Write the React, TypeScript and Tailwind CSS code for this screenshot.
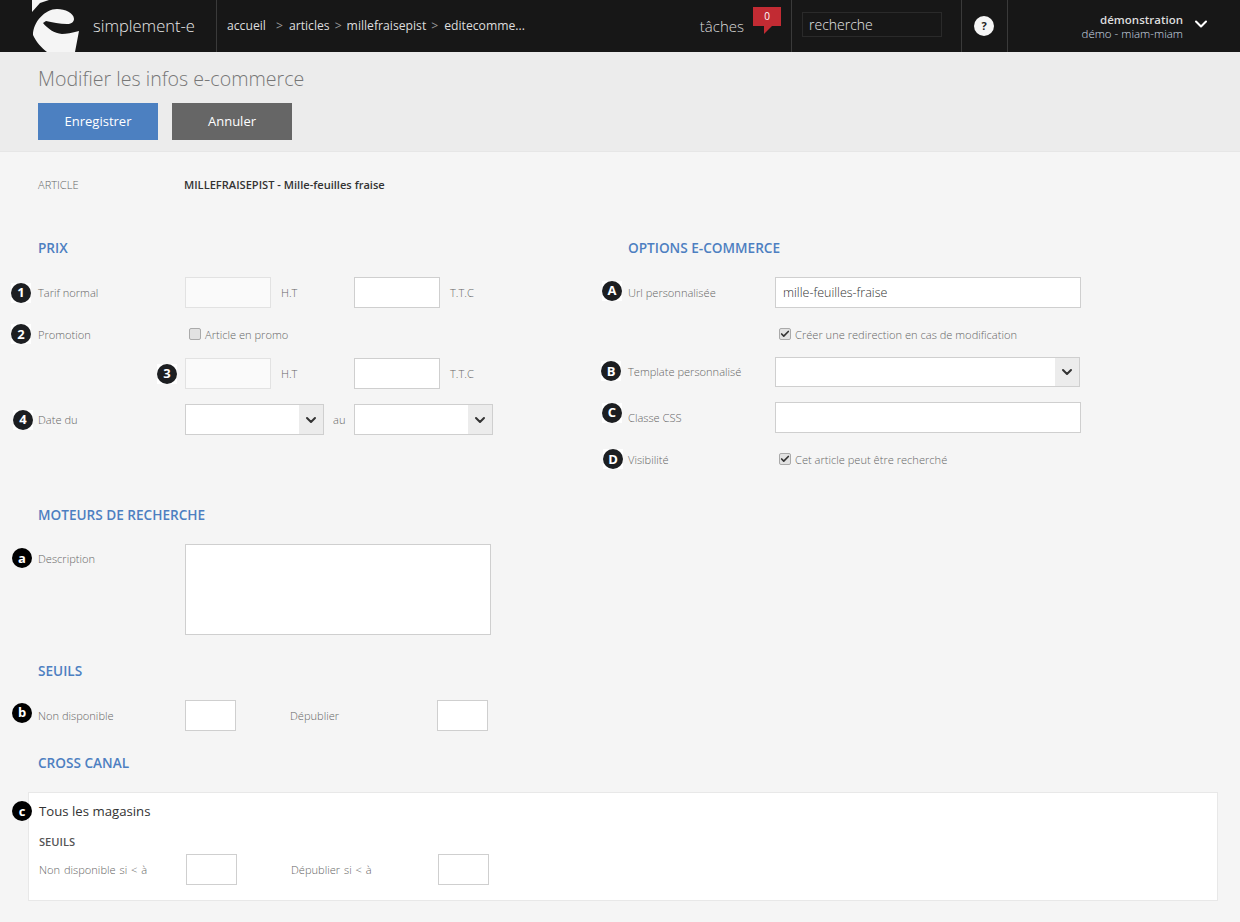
import type { ReactNode } from "react";
import { ChevronDown, Check as CheckIcon } from "lucide-react";

const font = "font-['Open_Sans',sans-serif]";

function Badge({ children, className, black }: { children: ReactNode; className: string; black?: boolean }) {
  return (
    <span className={`absolute top-1/2 flex h-[20px] w-[20px] -translate-y-1/2 ${black ? "" : "bg-white"} ${className}`}>
      <span className={`flex h-full w-full items-center justify-center rounded-full text-[13px] font-bold leading-none text-white ${black ? "bg-black" : "bg-[#1c1e21]"}`}>
        {children}
      </span>
    </span>
  );
}

function Label({ children, className = "" }: { children: ReactNode; className?: string }) {
  return <span className={`text-[11.1px] font-light leading-[18px] text-[#666] ${className}`}>{children}</span>;
}

function Heading({ children, className = "" }: { children: ReactNode; className?: string }) {
  return <h2 className={`text-[13.6px] font-semibold leading-[18px] text-[#4d7fc1] ${className}`}>{children}</h2>;
}

function Input({ className = "", disabled, value }: { className?: string; disabled?: boolean; value?: string }) {
  return (
    <input
      readOnly
      value={value ?? ""}
      className={`h-[31px] border px-[7px] text-[12.5px] font-light text-[#333] outline-none ${disabled ? "border-[#e2e2e2] bg-[#fafafa]" : "border-[#cfcfcf] bg-white"} ${className}`}
    />
  );
}

function Select({ className = "" }: { className?: string }) {
  return (
    <div className={`flex justify-end border border-[#cfcfcf] bg-white ${className}`}>
      <span className="flex w-[24px] items-center justify-center bg-[#ececec]">
        <ChevronDown size={16} strokeWidth={3} className="text-[#333]" />
      </span>
    </div>
  );
}

function Check({ checked, children }: { checked?: boolean; children: ReactNode }) {
  return (
    <div className="flex h-[18px] items-center gap-[4px] pl-[4px]">
      <span className="-mt-[2px] flex h-[12px] w-[12px] items-center justify-center rounded-[2px] border border-[#aaa] bg-[#e2e2e2]">
        {checked && <CheckIcon size={10} strokeWidth={4} className="text-[#333]" />}
      </span>
      <Label>{children}</Label>
    </div>
  );
}

function Logo() {
  return (
    <svg viewBox="30 0 52 52" className="h-[52px] w-[52px] shrink-0">
      <path fill="#f5f5f5" d="M32 0 H49 L40 3 L32 12 Z" />
      <path
        fill="#f5f5f5"
        d="M43 23 L46 21 C52 22 60 24 67 24 C71 24 74 22 74 19 C74 13 65 9 57 9 C45 9 33 22 33 35 C36 42 42 48 47 52 H75 L79 31 C72 33 66 34 62 34 C54 33 48 29 43 23 Z"
      />
    </svg>
  );
}

function Row({ children, className = "" }: { children: ReactNode; className?: string }) {
  return <div className={`relative flex items-center ${className}`}>{children}</div>;
}

export default function App() {
  return (
    <div className={`min-h-[922px] bg-[#f5f5f5] ${font}`}>
      <header className="flex h-[52px] items-stretch bg-[#171717] text-[#e8e8e8]">
        <div className="flex w-[217px] items-center overflow-hidden border-r border-[#3a3a3a] pl-[30px]">
          <Logo />
          <span className="ml-[11px] text-[16.5px] font-light">simplement-e</span>
        </div>
        <nav className="flex w-[575px] items-center border-r border-[#3a3a3a] pl-[10px] text-[12.2px] text-[#ddd]">
          <span className="mr-[10px]">accueil</span>
          <span className="mr-[6px] text-[#999]">&gt;</span>
          <span className="mr-[5px]">articles</span>
          <span className="mr-[5px] text-[#999]">&gt;</span>
          <span className="mr-[5px]">millefraisepist</span>
          <span className="mr-[6px] text-[#999]">&gt;</span>
          <span>editecomme...</span>
          <span className="ml-auto mr-[47px] text-[15px] font-light">tâches</span>
        </nav>
        <div className="w-0">
          <div className="relative -ml-[39px] mt-[7px] flex h-[19px] w-[28px] justify-center bg-[#c22b33] text-[10px] leading-[18px] text-white">
            0
            <span className="absolute left-[11px] top-[19px] border-r-[8px] border-t-[8px] border-r-transparent border-t-[#c22b33]" />
          </div>
        </div>
        <div className="flex w-[170px] border-r border-[#3a3a3a] pl-[10px] pt-[12px]">
          <div className="flex h-[25px] w-[140px] items-center border border-[#2a2a2a] pl-[6px] text-[14px] font-light text-[#e8e8e8]">
            recherche
          </div>
        </div>
        <div className="flex w-[46px] items-center justify-center border-r border-[#3a3a3a] pr-[1px]">
          <span className="flex h-[20px] w-[20px] items-center justify-center rounded-full bg-[#f5f5f5] text-[11px] font-bold text-[#222]">?</span>
        </div>
        <div className="flex flex-1 items-center justify-end pr-[29px]">
          <div className="mt-[2px] text-right text-[11.5px] leading-[14px]">
            <div className="font-semibold text-[#ddd]">démonstration</div>
            <div className="font-light text-[#cfdde6]">démo - miam-miam</div>
          </div>
          <ChevronDown size={20} strokeWidth={2.5} className="ml-[8px] -mt-[4px] text-white" />
        </div>
      </header>

      <section className="h-[100px] border-b border-[#e6e6e6] bg-[#ececec] pl-[38px] pt-[13px]">
        <h1 className="text-[19.6px] font-light leading-[28px] text-[#777]">Modifier les infos e-commerce</h1>
        <div className="mt-[10px] flex gap-[14px]">
          <button className="h-[37px] w-[120px] bg-[#4c80c1] text-[13px] text-white">Enregistrer</button>
          <button className="h-[37px] w-[120px] bg-[#666] text-[13px] text-white">Annuler</button>
        </div>
      </section>

      <main className="pl-[38px] pt-[24px]">
        <div className="flex h-[18px] items-center">
          <Label className="w-[146px]">ARTICLE</Label>
          <span className="text-[11.1px] font-semibold text-[#333]">MILLEFRAISEPIST - Mille-feuilles fraise</span>
        </div>

        <div className="mt-[45px] flex">
          <div className="w-[590px]">
            <Heading>PRIX</Heading>
            <Row className="mt-[20px]">
              <Badge className="-left-[27px]">1</Badge>
              <Label className="w-[147px]">Tarif normal</Label>
              <Input disabled className="w-[86px]" />
              <Label className="w-[83px] pl-[10px]">H.T</Label>
              <Input className="w-[86px]" />
              <Label className="pl-[10px]">T.T.C</Label>
            </Row>
            <Row className="mt-[18px]">
              <Badge className="-left-[27px] -mt-[1px]">2</Badge>
              <Label className="w-[147px]">Promotion</Label>
              <Check>Article en promo</Check>
            </Row>
            <Row className="mt-[14px] pl-[147px]">
              <Badge className="left-[119px]">3</Badge>
              <Input disabled className="w-[86px]" />
              <Label className="w-[83px] pl-[10px]">H.T</Label>
              <Input className="w-[86px]" />
              <Label className="pl-[10px]">T.T.C</Label>
            </Row>
            <Row className="mt-[15px]">
              <Badge className="-left-[25px]">4</Badge>
              <Label className="w-[147px]">Date du</Label>
              <Select className="h-[31px] w-[139px]" />
              <Label className="w-[30px] pl-[9px]">au</Label>
              <Select className="h-[31px] w-[139px]" />
            </Row>
          </div>

          <div>
            <Heading>OPTIONS E-COMMERCE</Heading>
            <Row className="mt-[20px]">
              <Badge className="-left-[26px] -mt-[2px]">A</Badge>
              <Label className="w-[147px]">Url personnalisée</Label>
              <Input className="w-[306px]" value="mille-feuilles-fraise" />
            </Row>
            <div className="mt-[18px] pl-[147px]">
              <Check checked>Créer une redirection en cas de modification</Check>
            </div>
            <Row className="mt-[13px]">
              <Badge className="-left-[27px] -mt-[1px]">B</Badge>
              <Label className="w-[147px]">Template personnalisé</Label>
              <Select className="h-[30px] w-[305px]" />
            </Row>
            <Row className="mt-[15px]">
              <Badge className="-left-[26px] -mt-[5px]">C</Badge>
              <Label className="w-[147px]">Classe CSS</Label>
              <Input className="w-[306px]" />
            </Row>
            <Row className="mt-[18px]">
              <Badge className="-left-[25px] -mt-[1px]">D</Badge>
              <Label className="w-[147px]">Visibilité</Label>
              <Check checked>Cet article peut être recherché</Check>
            </Row>
          </div>
        </div>

        <Heading className="mt-[37px]">MOTEURS DE RECHERCHE</Heading>
        <Row className="mt-[20px] items-start">
          <Label className="w-[147px] pt-[6px]">
            <span className="relative block">
              <Badge black className="-left-[26px] -mt-[1px]">a</Badge>
              Description
            </span>
          </Label>
          <textarea readOnly className="h-[91px] w-[306px] resize-none border border-[#cfcfcf] bg-white outline-none" />
        </Row>

        <Heading className="mt-[27px]">SEUILS</Heading>
        <Row className="mt-[20px]">
          <Badge black className="-left-[26px] -mt-[3px]">b</Badge>
          <Label className="w-[147px]">Non disponible</Label>
          <Input className="w-[51px]" />
          <Label className="ml-[54px] w-[147px]">Dépublier</Label>
          <Input className="w-[51px]" />
        </Row>

        <Heading className="mt-[23px]">CROSS CANAL</Heading>
        <div className="-ml-[10px] mt-[20px] h-[109px] w-[1190px] border border-[#e8e8e8] bg-white pl-[10px] pt-[8px]">
          <div className="relative text-[13.2px] font-medium leading-[20px] text-[#333]">
            <Badge black className="-left-[27px]">c</Badge>
            Tous les magasins
          </div>
          <div className="mt-[13px] text-[11.1px] font-semibold leading-[16px] text-[#555]">SEUILS</div>
          <Row className="mt-[4px]">
            <Label className="w-[147px] [word-spacing:1px]">Non disponible si &lt; à</Label>
            <Input className="w-[51px]" />
            <Label className="ml-[54px] w-[147px] [word-spacing:1px]">Dépublier si &lt; à</Label>
            <Input className="w-[51px]" />
          </Row>
        </div>
      </main>
    </div>
  );
}
